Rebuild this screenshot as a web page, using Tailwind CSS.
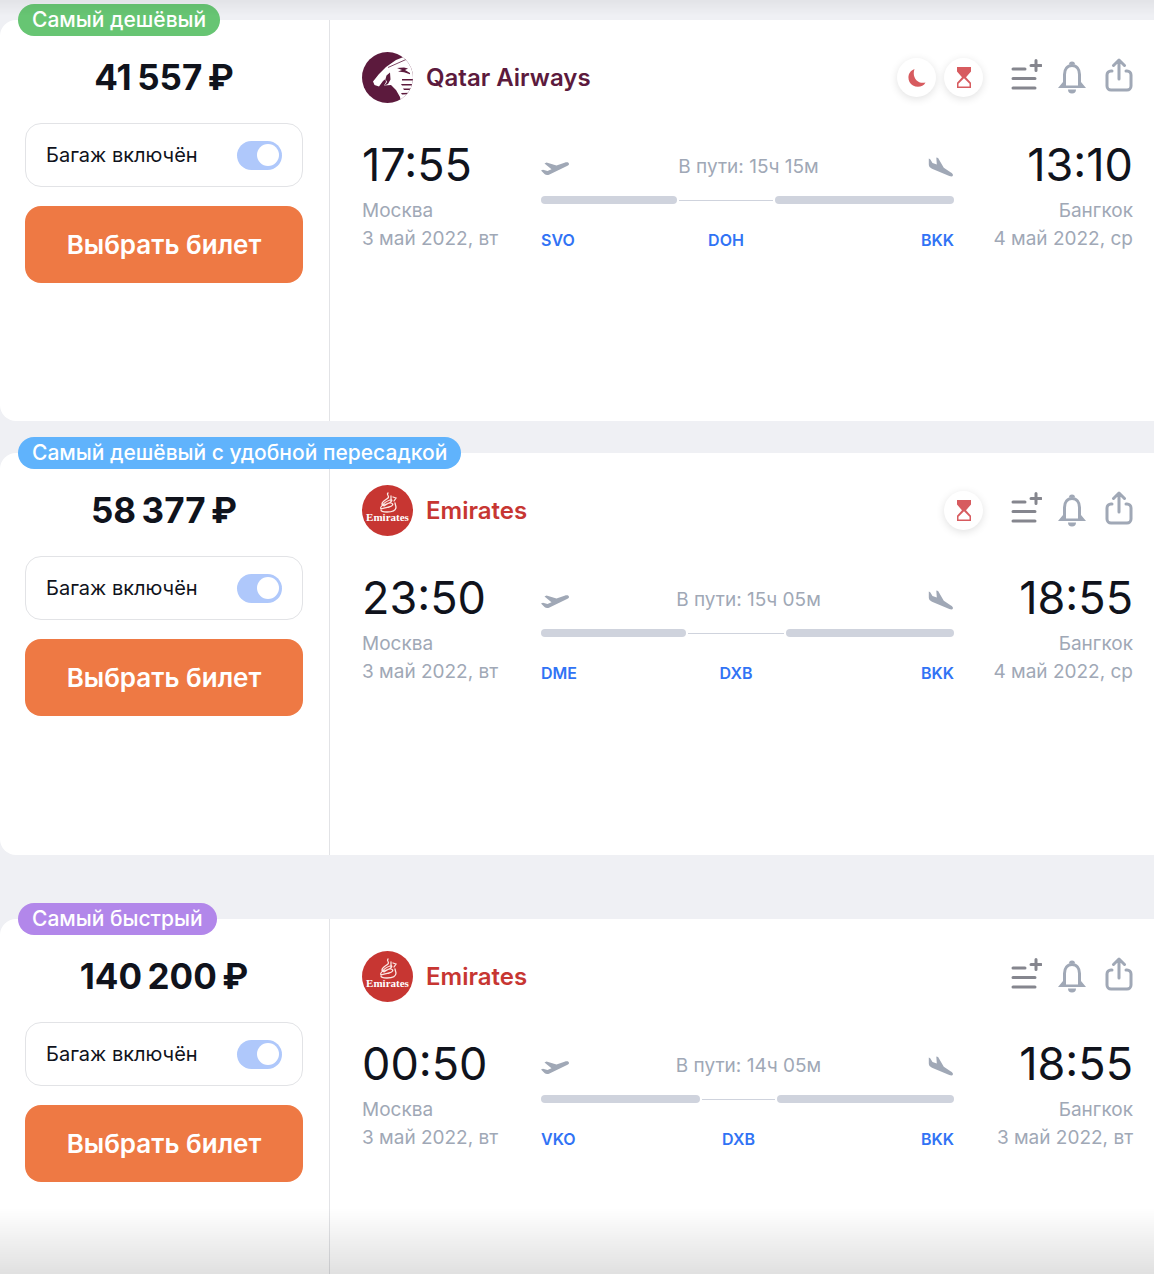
<!DOCTYPE html>
<html lang="ru">
<head>
<meta charset="utf-8">
<meta name="viewport" content="width=device-width, initial-scale=1">
<title>Авиабилеты Москва — Бангкок</title>
<script src="https://cdn.jsdelivr.net/npm/@tailwindcss/browser@4"></script>
</head>
<body class="bg-[#eff0f4] font-['Inter',sans-serif] text-[#10131c]">
<svg class="hidden" aria-hidden="true">
  <symbol id="qatar" viewBox="0 0 51 51">
    <path fill="#5c1a3d" d="M0 0h51v51H0z"/>
    <path fill="#fff" d="M44 4 34 8 24 15 17 22 11 29.500 12.500 33 17 34.500 21 29 23.500 27 24 30 22 33.500 29 33 34 38 38 45 39 51H53V12z"/>
    <path fill="#5c1a3d" d="m28 20.500-3.500 3-1 3.500 1.500 3-2.500 3.500 3.500-1.500 2.500-4.500z"/>
    <path stroke="#5c1a3d" fill="none" stroke-width=".8" d="M26 15.500 44 7.500"/>
    <path fill="#5c1a3d" d="m35 16 7-.5 4 1-3 1.500 5 3v1.200l-6-2-6-.7 4-1.500zM40 27h11v1.400H40zM39 32h12v1.400H40zM41 36.500h10v1.400H42zM39 41l9-.3-1 1.600-7 .2z"/>
  </symbol>
  <symbol id="emirates" viewBox="0 0 51 51">
    <path fill="#c73632" d="M0 0h51v51H0z"/>
    <g fill="none" stroke="#fbe6e2" stroke-width="1.300" stroke-linecap="round">
      <path d="M26 8c-2 2 2 3 0 5s-6 3-6 6 4 0 7-1 4-4 1-3-7 4-9 7 4 1 8 0 5-3 2-4-5 2-7 3M29 11v5M31 12l3 1-2 3M33 18l1 4c0 4-5 5-9 5s-6-1-6-2"/>
    </g>
    <text x="25.500" y="36" text-anchor="middle" fill="#fff" font-family="Liberation Serif, serif" font-weight="700" font-size="11">Emirates</text>
  </symbol>
  <symbol id="moon" viewBox="0 0 20 20"><path fill="#d75b5f" d="M7.500 1C2 3 0 9 2.500 14c3 6 13 6.500 16 .5C11 16.500 4.500 9.500 7.500 1z"/></symbol>
  <symbol id="hourglass" viewBox="0 0 14 21"><path fill="#d75b5f" d="M0 0h14v4.500L9 10.300l5 5.500V21H0v-5.200l5-5.500L0 4.500z"/><path fill="#fff" d="m7 11.300-5.500 5.500V19.500h11v-2.700z"/></symbol>
  <symbol id="list" viewBox="0 0 32 32"><path fill="none" stroke="#85868e" stroke-width="3" stroke-linecap="round" d="M3 11h12M3 20.500h22M3 30h22M21 7.500h10M26 2.500v10"/></symbol>
  <symbol id="bell" viewBox="0 0 28 34"><path fill="none" stroke="#a0a8b6" stroke-width="3" d="M6.500 26V14.500c0-5.500 3-9 7.500-9s7.500 3.500 7.500 9V26"/><path fill="#a0a8b6" d="M11 4.500a3 3 0 0 1 6 0zM0 28 5 22v3.500h18V22l5 6zM10 29.500h8a4 4 0 0 1-8 0z"/></symbol>
  <symbol id="share" viewBox="0 0 28 34"><path fill="none" stroke="#a0a8b6" stroke-width="3" stroke-linecap="round" stroke-linejoin="round" d="M7 13H6A4 4 0 0 0 2 17V28a4 4 0 0 0 4 4H22a4 4 0 0 0 4-4V17a4 4 0 0 0-4-4H21M14 21V2.500M8.500 7.500 14 2l5.500 5.500"/></symbol>
  <symbol id="depart" viewBox="0 -4 28 18"><path fill="#a0a8b6" d="M0 8.500l2-.8 4.500 1.200 4-1.600L3.500 1.400 5.500.5l10 3.100 8-2.900c2.500-.8 4.500-.4 4.500 1.200 0 1-1 1.800-2.500 2.300L8.500 12.500c-2 .9-3.800.7-5-.6z"/></symbol>
  <symbol id="land" viewBox="0 0 26 20"><path fill="#a0a8b6" d="M.8 1.500 2.200 2.200 4.500 6 8.800 7.500 8.300.6l1.800.4 5.700 9.800 6.700 4.400c2 1.200 2.800 2.200 2.400 3.300-.4 1.200-1.800 1.200-3.600.5L4 11.700C1.800 10.600.8 9.500.8 7.500z"/></symbol>
</svg>

<main id="tickets" class="flex min-h-screen flex-col pt-5"></main>
<div class="pointer-events-none fixed inset-x-0 top-0 h-4 bg-linear-to-b from-black/5 to-transparent"></div>
<div class="pointer-events-none fixed inset-x-0 bottom-0 h-[66px] bg-linear-to-t from-black/12 to-transparent"></div>

<script>
const emirates = { airline: 'Emirates', logo: 'emirates', color: 'text-[#c73632]' };
const tickets = [
  { badge: 'Самый дешёвый', tone: 'bg-[#67c573]', price: '41 557 ₽', airline: 'Qatar Airways', logo: 'qatar', color: 'text-[#5c1a3d]',
    flags: [['moon', 'Ночная пересадка', 'h-5 w-5'], ['hourglass', 'Долгая пересадка', 'h-[21px] w-[14px]']],
    times: ['17:55', '13:10'], dates: ['3 май 2022, вт', '4 май 2022, ср'], length: '15ч 15м', codes: ['SVO', 'DOH', 'BKK'], parts: [136, 98, 179], space: 'min-h-[401px]' },
  { ...emirates, badge: 'Самый дешёвый с удобной пересадкой', tone: 'bg-[#60b3fc]', price: '58 377 ₽',
    flags: [['hourglass', 'Долгая пересадка', 'h-[21px] w-[14px]']],
    times: ['23:50', '18:55'], dates: ['3 май 2022, вт', '4 май 2022, ср'], length: '15ч 05м', codes: ['DME', 'DXB', 'BKK'], parts: [145, 100, 168], space: 'mt-8 min-h-[402px]' },
  { ...emirates, badge: 'Самый быстрый', tone: 'bg-[#b287ea]', price: '140 200 ₽', flags: [],
    times: ['00:50', '18:55'], dates: ['3 май 2022, вт', '3 май 2022, вт'], length: '14ч 05м', codes: ['VKO', 'DXB', 'BKK'], parts: [159, 77, 177], space: 'mt-16 flex-1 rounded-b-none' },
];
const icon = (id, size) => `<svg class="${size}" aria-hidden="true"><use href="#${id}"/></svg>`;
const stop = (side, time, city, date) => `
  <div class="w-[179px] shrink-0 ${side}">
    <div class="text-[45px] leading-[52px]">${time}</div>
    <div class="mt-[6px] text-[19px] leading-7 text-[#a0a8b6]"><p>${city}</p><p>${date}</p></div>
  </div>`;
document.getElementById('tickets').innerHTML = tickets.map((t, i) => `
  <article class="relative flex rounded-l-2xl bg-white ${t.space}">
    <span class="absolute -top-4 left-[18px] rounded-full px-[14px] text-[21px] leading-8 font-medium whitespace-nowrap text-white ${t.tone}">${t.badge}</span>
    <section class="w-[330px] shrink-0 border-r border-[#e2e3e6] pt-8 pr-[26px] pl-[25px]">
      <p class="text-center text-[35px] leading-[51px] font-bold">${t.price.replace(/ /g, '\u2009')}</p>
      <label for="bag${i}" class="mt-5 flex h-16 items-center justify-between rounded-2xl border border-[#e2e3e6] px-5 text-xl">
        Багаж включён
        <input id="bag${i}" type="checkbox" checked class="h-[29px] w-[45px] appearance-none rounded-full bg-[#afc8fb] px-1 py-[3px] before:block before:size-[22px] before:rounded-full before:bg-white checked:before:ml-4">
      </label>
      <button type="button" class="mt-[19px] h-[77px] w-full rounded-2xl bg-[#ee7944] text-[26px] font-semibold text-white">Выбрать билет</button>
    </section>
    <section class="min-w-0 flex-1 pt-8 pr-[21px] pl-8">
      <header class="flex h-[51px] items-center">
        ${icon(t.logo, 'size-[51px] rounded-full')}
        <h2 class="ml-[13px] text-2xl font-semibold ${t.color}">${t.airline}</h2>
        <div class="ml-auto flex gap-2">${t.flags.map(([id, label, size]) => `
          <span role="img" aria-label="${label}" class="flex size-[39px] items-center justify-center rounded-full bg-white shadow-[0_2px_8px_rgb(0_0_0/0.12)]">${icon(id, size)}</span>`).join('')}
        </div>
        <div class="ml-[27px] flex items-center gap-4">
          <button type="button" aria-label="Добавить в список" class="-mt-2">${icon('list', 'size-8')}</button>
          <button type="button" aria-label="Следить за ценой" class="-mt-px">${icon('bell', 'h-[34px] w-7')}</button>
          <button type="button" aria-label="Поделиться" class="-mt-1.5 ml-[3px]">${icon('share', 'h-[34px] w-7')}</button>
        </div>
      </header>
      <div class="mt-9 flex">
        ${stop('text-left', t.times[0], 'Москва', t.dates[0])}
        <div class="min-w-0 flex-1">
          <div class="flex h-[52px] items-center justify-between pt-1">
            ${icon('depart', 'h-[18px] w-7')}
            <span class="text-[19px] text-[#a0a8b6]">В пути: ${t.length}</span>
            ${icon('land', 'h-5 w-[26px]')}
          </div>
          <div class="mt-[5px] grid items-center" style="grid-template-columns:${t.parts.map(p => `minmax(0,${p}fr)`).join(' ')}">
            <i class="h-2 rounded-full bg-[#cfd3dd]"></i>
            <i class="mx-[2px] h-px bg-[#cfd3dd]"></i>
            <i class="h-2 rounded-full bg-[#cfd3dd]"></i>
            <a href="#" class="mt-6 justify-self-start leading-6 font-semibold text-[#3173f5]">${t.codes[0]}</a>
            <a href="#" class="mt-6 justify-self-center leading-6 font-semibold text-[#3173f5]">${t.codes[1]}</a>
            <a href="#" class="mt-6 justify-self-end leading-6 font-semibold text-[#3173f5]">${t.codes[2]}</a>
          </div>
        </div>
        ${stop('text-right', t.times[1], 'Бангкок', t.dates[1])}
      </div>
    </section>
  </article>`).join('');
</script>
</body>
</html>
